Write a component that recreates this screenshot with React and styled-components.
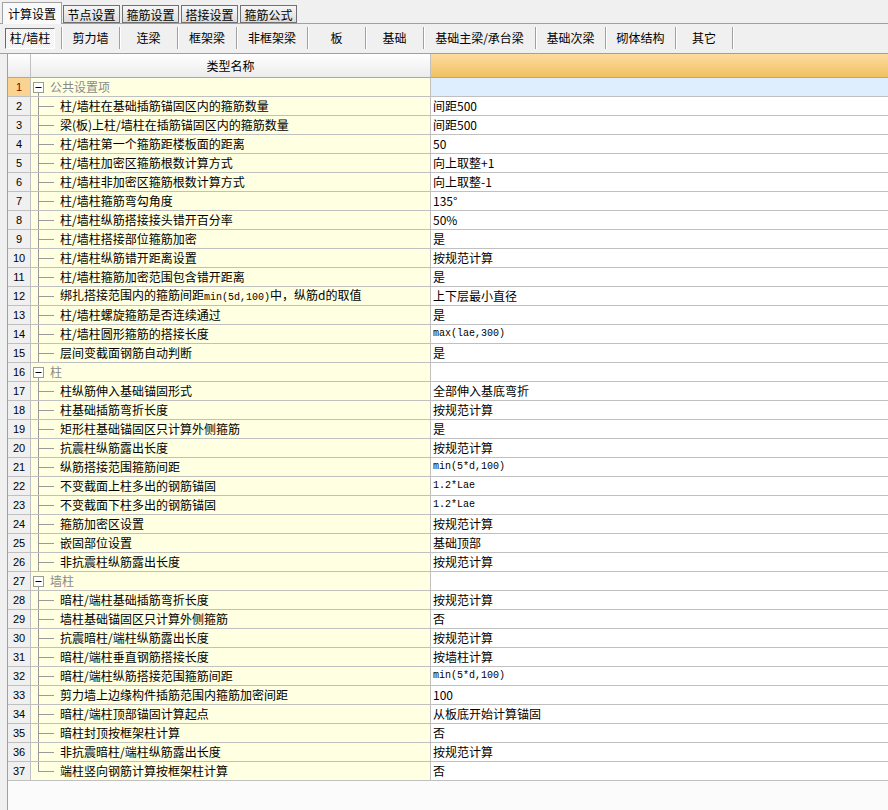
import React from "react";
import styled, { createGlobalStyle } from "styled-components";

const GlobalStyle = createGlobalStyle`
  html, body {
    margin: 0;
    padding: 0;
    background: #f0f0f0;
  }
  body {
    font-family: "Noto Sans CJK SC", "Liberation Sans", sans-serif;
    font-size: 12px;
    color: #000;
  }
`;

const topTabs = ["计算设置", "节点设置", "箍筋设置", "搭接设置", "箍筋公式"];

const subTabs = [
  { label: "柱/墙柱", width: 58, active: true },
  { label: "剪力墙", width: 58 },
  { label: "连梁", width: 58 },
  { label: "框架梁", width: 59 },
  { label: "非框架梁", width: 71 },
  { label: "板", width: 58 },
  { label: "基础", width: 58 },
  { label: "基础主梁/承台梁", width: 112 },
  { label: "基础次梁", width: 70 },
  { label: "砌体结构", width: 70 },
  { label: "其它", width: 57 },
];

// kind: g = group, c = child, l = last child
const rows = [
  ["g", "公共设置项", ""],
  ["c", "柱/墙柱在基础插筋锚固区内的箍筋数量", "间距500"],
  ["c", "梁(板)上柱/墙柱在插筋锚固区内的箍筋数量", "间距500"],
  ["c", "柱/墙柱第一个箍筋距楼板面的距离", "50"],
  ["c", "柱/墙柱加密区箍筋根数计算方式", "向上取整+1"],
  ["c", "柱/墙柱非加密区箍筋根数计算方式", "向上取整-1"],
  ["c", "柱/墙柱箍筋弯勾角度", "135°"],
  ["c", "柱/墙柱纵筋搭接接头错开百分率", "50%"],
  ["c", "柱/墙柱搭接部位箍筋加密", "是"],
  ["c", "柱/墙柱纵筋错开距离设置", "按规范计算"],
  ["c", "柱/墙柱箍筋加密范围包含错开距离", "是"],
  ["c", "@12", "上下层最小直径"],
  ["c", "柱/墙柱螺旋箍筋是否连续通过", "是"],
  ["c", "柱/墙柱圆形箍筋的搭接长度", "~max(lae,300)"],
  ["c", "层间变截面钢筋自动判断", "是"],
  ["g", "柱", ""],
  ["c", "柱纵筋伸入基础锚固形式", "全部伸入基底弯折"],
  ["c", "柱基础插筋弯折长度", "按规范计算"],
  ["c", "矩形柱基础锚固区只计算外侧箍筋", "是"],
  ["c", "抗震柱纵筋露出长度", "按规范计算"],
  ["c", "纵筋搭接范围箍筋间距", "~min(5*d,100)"],
  ["c", "不变截面上柱多出的钢筋锚固", "~1.2*Lae"],
  ["c", "不变截面下柱多出的钢筋锚固", "~1.2*Lae"],
  ["c", "箍筋加密区设置", "按规范计算"],
  ["c", "嵌固部位设置", "基础顶部"],
  ["c", "非抗震柱纵筋露出长度", "按规范计算"],
  ["g", "墙柱", ""],
  ["c", "暗柱/端柱基础插筋弯折长度", "按规范计算"],
  ["c", "墙柱基础锚固区只计算外侧箍筋", "否"],
  ["c", "抗震暗柱/端柱纵筋露出长度", "按规范计算"],
  ["c", "暗柱/端柱垂直钢筋搭接长度", "按墙柱计算"],
  ["c", "暗柱/端柱纵筋搭接范围箍筋间距", "~min(5*d,100)"],
  ["c", "剪力墙上边缘构件插筋范围内箍筋加密间距", "100"],
  ["c", "暗柱/端柱顶部锚固计算起点", "从板底开始计算锚固"],
  ["c", "暗柱封顶按框架柱计算", "否"],
  ["c", "非抗震暗柱/端柱纵筋露出长度", "按规范计算"],
  ["l", "端柱竖向钢筋计算按框架柱计算", "否"],
];

function TreeGlyph({ kind }) {
  if (kind === "g") {
    return (
      <svg width="12" height="18" style={{ flex: "none" }}>
        <rect x="0.5" y="4.5" width="10" height="10" fill="#fff" stroke="#9a9a9a" />
        <line x1="2.5" y1="9.5" x2="8.5" y2="9.5" stroke="#000" />
        <line x1="5.5" y1="15" x2="5.5" y2="18" stroke="#9a9a9a" />
      </svg>
    );
  }
  return (
    <svg width="25" height="18" style={{ flex: "none" }}>
      <line x1="5.5" y1="0" x2="5.5" y2={kind === "l" ? 10 : 18} stroke="#9a9a9a" />
      <line x1="5.5" y1="9.5" x2="21" y2="9.5" stroke="#9a9a9a" />
    </svg>
  );
}

function Value({ text }) {
  if (text.startsWith("~")) return <Mono>{text.slice(1)}</Mono>;
  return text;
}

export default function App() {
  return (
    <Page>
      <GlobalStyle />
      <TabStrip>
        {topTabs.map((t, i) => (
          <TopTab key={t} $active={i === 0}>
            {t}
          </TopTab>
        ))}
      </TabStrip>
      <SubBar>
        {subTabs.map((s) => (
          <SubItem key={s.label} style={{ width: s.width }} $active={s.active}>
            {s.active ? <Pressed>{s.label}</Pressed> : s.label}
          </SubItem>
        ))}
      </SubBar>
      <Grid>
        <Row>
          <HeadNum />
          <HeadName>类型名称</HeadName>
          <HeadValue />
        </Row>
        {rows.map(([kind, name, value], i) => (
          <Row key={i}>
            <NumCell $current={i === 0}>{i + 1}</NumCell>
            <NameCell>
              <TreeGlyph kind={kind} />
              {kind === "g" ? (
                <GroupLabel>{name}</GroupLabel>
              ) : (
                <ItemLabel>
                  {name === "@12" ? (
                    <>
                      绑扎搭接范围内的箍筋间距<Mono>min(5d,100)</Mono>中，纵筋d的取值
                    </>
                  ) : (
                    name
                  )}
                </ItemLabel>
              )}
            </NameCell>
            <ValueCell $current={i === 0}>
              <Value text={value} />
            </ValueCell>
          </Row>
        ))}
      </Grid>
    </Page>
  );
}

const Page = styled.div`
  width: 888px;
  height: 810px;
  overflow: hidden;
  display: flex;
  flex-direction: column;
  background: #f0f0f0;
`;

const TabStrip = styled.div`
  display: flex;
  align-items: flex-end;
  height: 23px;
  padding-left: 2px;
  border-bottom: 1px solid #a0a0a0;
`;

const TopTab = styled.div`
  box-sizing: border-box;
  display: flex;
  align-items: center;
  justify-content: center;
  width: ${(p) => (p.$active ? 60 : 57)}px;
  height: ${(p) => (p.$active ? 22 : 18)}px;
  margin-bottom: ${(p) => (p.$active ? -1 : 0)}px;
  margin-right: ${(p) => (p.$active ? 1 : 2)}px;
  border: 1px solid ${(p) => (p.$active ? "#a0a0a0" : "#707070")};
  border-bottom: ${(p) => (p.$active ? "none" : "1px solid #707070")};
  background: ${(p) =>
    p.$active ? "#f9f9f9" : "linear-gradient(#f6f6f6, #dcdcdc)"};
  font-size: 12px;
  line-height: 16px;
  padding-top: ${(p) => (p.$active ? 0 : 1)}px;
  position: relative;
`;

const SubBar = styled.div`
  display: flex;
  align-items: flex-start;
  height: 30px;
  box-sizing: border-box;
  padding: 3px 0 0 4px;
  border-bottom: 1px solid #a0a0a0;
`;

const SubItem = styled.div`
  box-sizing: border-box;
  height: 22px;
  display: flex;
  align-items: center;
  justify-content: ${(p) => (p.$active ? "flex-start" : "center")};
  padding-left: ${(p) => (p.$active ? 1 : 0)}px;
  border-right: 1px solid #a0a0a0;
  box-shadow: 1px 0 0 #ffffff;
  line-height: 16px;
`;

const Pressed = styled.div`
  box-sizing: border-box;
  width: 50px;
  height: 21px;
  display: flex;
  align-items: center;
  justify-content: center;
  border: 1px solid;
  border-color: #6a6a6a #ffffff #ffffff #6a6a6a;
  background: repeating-conic-gradient(#ffffff 0 25%, #ececec 0 50%) 0 0 / 2px 2px;
`;

const Grid = styled.div`
  flex: 1;
  margin-left: 7px;
  border-left: 1px solid #a0a0a0;
  background: #fbfbfb;
`;

const Row = styled.div`
  display: flex;
  height: 19px;
  &:first-child {
    height: 24px;
  }
`;

const HeadNum = styled.div`
  box-sizing: border-box;
  width: 23px;
  border-right: 1px solid #c0c0c0;
  border-bottom: 1px solid #a8a8a8;
  background: linear-gradient(#ffffff, #ececec);
`;

const HeadName = styled.div`
  box-sizing: border-box;
  width: 400px;
  display: flex;
  align-items: center;
  justify-content: center;
  border-right: 1px solid #c0c0c0;
  border-bottom: 1px solid #a8a8a8;
  background: linear-gradient(#ffffff, #ececec);
  line-height: 16px;
`;

const HeadValue = styled.div`
  flex: 1;
  border-bottom: 1px solid #a8a8a8;
  background: linear-gradient(#fcdca0, #f0c160);
`;

const NumCell = styled.div`
  box-sizing: border-box;
  width: 23px;
  display: flex;
  align-items: center;
  justify-content: center;
  border-right: 1px solid #c0c0c0;
  border-bottom: 1px solid #c0c0c0;
  background: ${(p) => (p.$current ? "#f8d490" : "#f0f0f0")};
  color: ${(p) => (p.$current ? "#800000" : "#000")};
  font-family: "Liberation Sans", sans-serif;
  font-size: 11px;
  line-height: 14px;
`;

const NameCell = styled.div`
  box-sizing: border-box;
  width: 400px;
  display: flex;
  align-items: center;
  padding-left: 2px;
  border-right: 1px solid #c0c0c0;
  border-bottom: 1px solid #c0c0c0;
  background: #ffffe1;
  white-space: nowrap;
  overflow: hidden;
`;

const GroupLabel = styled.span`
  margin-left: 5px;
  color: #8a8a8a;
  line-height: 16px;
`;

const ItemLabel = styled.span`
  margin-left: 2px;
  line-height: 16px;
`;

const ValueCell = styled.div`
  box-sizing: border-box;
  flex: 1;
  display: flex;
  align-items: center;
  padding-left: 2px;
  border-bottom: 1px solid #c0c0c0;
  background: ${(p) => (p.$current ? "#deeefe" : "#ffffff")};
  white-space: nowrap;
  line-height: 16px;
`;

const Mono = styled.span`
  font-family: "Liberation Mono", monospace;
  font-size: 10px;
`;
